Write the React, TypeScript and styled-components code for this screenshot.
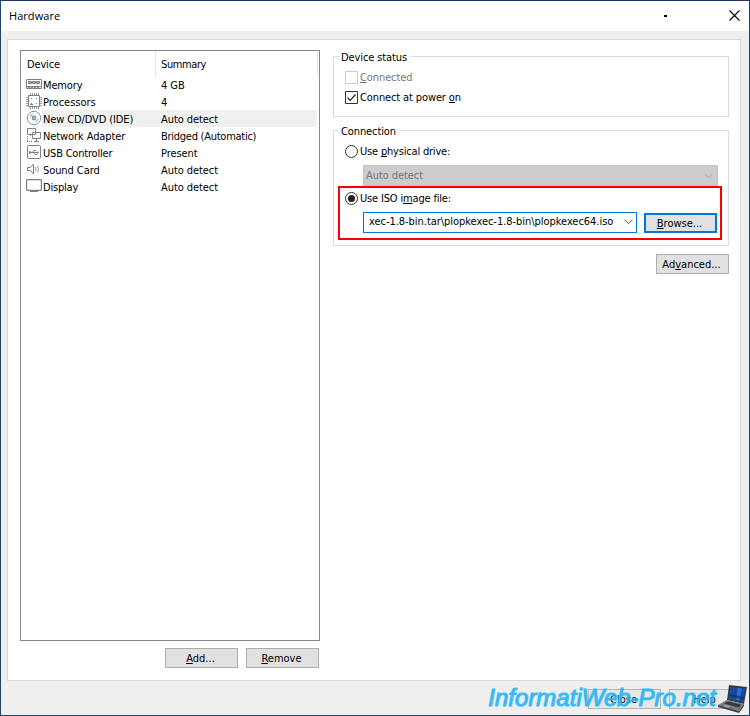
import React from 'react';
import styled, { createGlobalStyle } from 'styled-components';

const GlobalStyle = createGlobalStyle`
  * { box-sizing: border-box; }
  body { margin: 0; background: #fff; }
  u { text-decoration-thickness: 1px; text-underline-offset: 1px; text-decoration-skip-ink: none; }
`;

const Window = styled.div`
  position: relative;
  display: flex;
  flex-direction: column;
  width: 750px;
  height: 716px;
  overflow: hidden;
  border: 1px solid #1f4465;
  border-top-color: #243463;
  background: #efefef;
  color: #000;
  font: 11px/17px 'DejaVu Sans Condensed', Tahoma, 'DejaVu Sans', sans-serif;
`;

const TitleBar = styled.header`
  display: flex;
  align-items: center;
  height: 30px;
  padding: 0 9px 0 8px;
  background: #fff;
`;

const Title = styled.h1`
  flex: 1;
  margin: 0;
  font: 11px/16px 'Open Sans', sans-serif;
  letter-spacing: 0.05px;
`;

const Dot = styled.span`
  width: 3px;
  height: 2px;
  margin-right: 62px;
  background: #000;
`;

const CloseIcon = styled.svg`
  width: 11px;
  height: 11px;
  margin-top: -1px;
`;

const Page = styled.main`
  display: flex;
  height: 642px;
  margin: 8px 8px 0 6px;
  padding: 10px 11px 0 12px;
  border: 1px solid #d9d9d9;
  background: #fff;
`;

const DeviceColumn = styled.section`
  display: flex;
  flex-direction: column;
  width: 300px;
`;

const DeviceList = styled.div`
  height: 591px;
  border: 1px solid #828790;
`;

const ListHeader = styled.div`
  display: flex;
  height: 25px;
  margin-right: 1px;
  line-height: 27px;
`;

const HeaderCell = styled.div<{ $wide?: boolean }>`
  flex: ${(p) => (p.$wide ? '1' : '0 0 135px')};
  padding-left: ${(p) => (p.$wide ? 5 : 6)}px;
  border-right: 1px solid #e5e5e5;
`;

const Row = styled.div`
  display: flex;
  height: 17px;
  padding: 0 2px 0 5px;
`;

const Icon = styled.svg`
  flex: none;
  width: 16px;
  height: 16px;
  fill: none;
  stroke: #808080;
`;

const RowText = styled.div<{ $selected?: boolean }>`
  display: flex;
  flex: 1;
  padding-left: 1px;
  background: ${(p) => (p.$selected ? '#f0f0f0' : 'transparent')};
  line-height: 19px;
`;

const Text = styled.span<{ $track?: number }>`
  letter-spacing: ${(p) => p.$track ?? 0}px;
  white-space: pre;
`;

const DeviceName = styled(Text)`
  flex: 0 0 118px;
`;

const ListButtons = styled.div`
  display: flex;
  justify-content: flex-end;
  gap: 8px;
  margin: 7px 1px 0 0;
`;

const Button = styled.button<{ $default?: boolean }>`
  flex: none;
  width: 73px;
  height: 20px;
  padding: 0 2px 0 0;
  border: ${(p) => (p.$default ? '2px solid #0078d7' : '1px solid #adadad')};
  background: #e1e1e1;
  color: #000;
  font: inherit;
  line-height: 15px;
`;

const Settings = styled.section`
  display: flex;
  flex: 1;
  flex-direction: column;
  padding-left: 13px;
`;

const Group = styled.div<{ $height: number; $top: number }>`
  display: flex;
  flex-direction: column;
  height: ${(p) => p.$height}px;
  margin-top: ${(p) => p.$top}px;
  padding: 0 11px;
  border: 1px solid #dcdcdc;
`;

const Legend = styled.div`
  align-self: flex-start;
  height: 17px;
  margin: -8px 0 0 -6px;
  padding: 0 3px 0 2px;
  background: #fff;
`;

const Option = styled.label<{ $top: number; $disabled?: boolean }>`
  display: flex;
  flex: none;
  align-items: center;
  gap: 2px;
  height: 17px;
  margin-top: ${(p) => p.$top}px;
  color: ${(p) => (p.$disabled ? '#777' : '#000')};
`;

const Mark = styled.svg`
  flex: none;
  width: 13px;
  height: 13px;
  fill: #fff;
`;

const Combo = styled.div<{ $disabled?: boolean }>`
  display: flex;
  align-items: center;
  flex: ${(p) => (p.$disabled ? 'none' : '0 0 274px')};
  height: 21px;
  margin: ${(p) => (p.$disabled ? '5px -1px 0 18px' : '0')};
  padding: ${(p) => (p.$disabled ? '0 4px 0 2px' : '0 3px 2px 5px')};
  border: 1px solid ${(p) => (p.$disabled ? '#c3c3c3' : '#0078d7')};
  background: ${(p) => (p.$disabled ? '#ccc' : '#fff')};
  color: ${(p) => (p.$disabled ? '#777' : '#000')};
`;

const ComboText = styled(Text)`
  flex: 1;
`;

const Chevron = styled.svg<{ $disabled?: boolean }>`
  width: 9px;
  height: 6px;
  fill: none;
  stroke: ${(p) => (p.$disabled ? '#aaa' : '#505050')};
`;

const FileRow = styled.div`
  display: flex;
  gap: 7px;
  margin: 5px 0 0 18px;
  align-items: flex-start;

  & > button { margin-top: 1px; }
`;

const AdvancedRow = styled.div`
  display: flex;
  justify-content: flex-end;
  margin-top: 8px;
`;

const Footer = styled.footer`
  display: flex;
  gap: 8px;
  padding: 8px 7px 0 0;
  justify-content: flex-end;

  button { background: #e8e8e8; border-color: #b5b5b5; }
`;

const Highlight = styled.div`
  position: absolute;
  left: 337px;
  top: 185px;
  width: 384px;
  height: 54px;
  border: 2px solid #f90000;
`;

const Watermark = styled.div`
  position: absolute;
  right: 33px;
  bottom: 3px;
  color: #2fa4f0;
  font: italic 24px/28px 'Liberation Sans', sans-serif;
  letter-spacing: 0;
  -webkit-text-stroke: 1px #24b8f2;
  text-shadow: 0 0 2px #7fe3ff;
  opacity: 0.88;
  white-space: nowrap;
`;

const Laptop = styled.svg`
  position: absolute;
  right: 0;
  bottom: 1px;
  width: 32px;
  height: 31px;
`;

const icons: Record<string, React.ReactNode> = {
  memory: (
    <>
      <path d="M.5 3.500h15v9H.5z" />
      <path d="M2.500 5.500h3v2h-3zM6.500 5.500h3v2h-3zM10.500 5.500h3v2h-3z" fill="#aaa" />
      <path d="M1 10.500h14" />
      <path d="M2 11.500h12" strokeDasharray="2 1" />
    </>
  ),
  cpu: (
    <>
      <path d="M2.500 2.500h11v11h-11z" />
      <path d="M4.500 0v2M6.500 0v2M8.500 0v2M10.500 0v2M12.500 0v2M4.500 14v2M6.500 14v2M8.500 14v2M10.500 14v2M12.500 14v2M0 4.500h2M0 6.500h2M0 8.500h2M0 10.500h2M0 12.500h2M14 4.500h2M14 6.500h2M14 8.500h2M14 10.500h2M14 12.500h2" stroke="#999" />
      <path d="M5 5.500h1M10 5.500h1M4 11.500h3M5 10.500h1M10 10.500h1" />
    </>
  ),
  disc: (
    <g stroke="#7893a9">
      <circle cx="8" cy="8" r="6.700" />
      <circle cx="8" cy="8" r="1.600" strokeWidth="1.700" />
      <path d="M4 6.800a4.200 4.200 0 0 1 2.500-2.700M12 9.200a4.200 4.200 0 0 1-2.500 2.700" />
    </g>
  ),
  network: (
    <>
      <path d="M1.500 1.500h8v6h-8zM6.500 5.500h8v6h-8zM10.500 11.500v3M8 14.500h5" fill="#fff" />
      <path d="M1.500 9v6M1 14.500h6M4.500 8v2" strokeDasharray="1 1" />
    </>
  ),
  usb: (
    <>
      <rect x="1.500" y="1.500" width="13" height="13" rx="1" />
      <path d="M4 8.500h8M6.500 8.500l1.500-2h2M7.500 8.500l1.500 2h2" />
      <path d="M3.500 7.500h1v2h-1zM11.500 7.500l1 1-1 1" />
    </>
  ),
  sound: (
    <>
      <path d="M1.500 6.500h3l3-3.500v10l-3-3.500h-3z" />
      <path d="M9.500 6q1 2 0 4M11.500 4.500q1.800 3.500 0 7" stroke="#999" />
    </>
  ),
  display: (
    <>
      <rect x=".6" y="1.600" width="14.800" height="10.800" rx=".8" strokeWidth="1.200" />
      <path d="M4 13.500h8" />
    </>
  ),
};

const devices = [
  { icon: 'memory', name: 'Memory', summary: '4 GB', track: -0.15 },
  { icon: 'cpu', name: 'Processors', summary: '4' },
  { icon: 'disc', name: 'New CD/DVD (IDE)', summary: 'Auto detect', selected: true, track: -0.12 },
  { icon: 'network', name: 'Network Adapter', summary: 'Bridged (Automatic)', track: -0.1, summaryTrack: -0.26 },
  { icon: 'usb', name: 'USB Controller', summary: 'Present', track: -0.2 },
  { icon: 'sound', name: 'Sound Card', summary: 'Auto detect', track: -0.08 },
  { icon: 'display', name: 'Display', summary: 'Auto detect', track: -0.2 },
];

export default function App() {
  return (
    <Window>
      <GlobalStyle />
      <TitleBar>
        <Title>Hardware</Title>
        <Dot />
        <CloseIcon viewBox="0 0 11 11" stroke="#000" strokeWidth="1.1">
          <path d="M.5.5l10 10M10.500.5l-10 10" />
        </CloseIcon>
      </TitleBar>
      <Page>
        <DeviceColumn>
          <DeviceList>
            <ListHeader>
              <HeaderCell><Text $track={-0.15}>Device</Text></HeaderCell>
              <HeaderCell $wide><Text $track={-0.4}>Summary</Text></HeaderCell>
            </ListHeader>
            {devices.map((d) => (
              <Row key={d.name}>
                <Icon viewBox="0 0 16 16">{icons[d.icon]}</Icon>
                <RowText $selected={d.selected}>
                  <DeviceName $track={d.track}>{d.name}</DeviceName>
                  <Text $track={d.summaryTrack ?? -0.07}>{d.summary}</Text>
                </RowText>
              </Row>
            ))}
          </DeviceList>
          <ListButtons>
            <Button><u>A</u>dd...</Button>
            <Button><u>R</u>emove</Button>
          </ListButtons>
        </DeviceColumn>
        <Settings>
          <Group $height={61} $top={6}>
            <Legend><Text $track={-0.1}>Device status</Text></Legend>
            <Option $top={3} $disabled>
              <Mark viewBox="0 0 13 13"><path d="M.5.5h12v12H.5z" stroke="#ccc" /></Mark>
              <Text $track={-0.1}><u>C</u>onnected</Text>
            </Option>
            <Option $top={3}>
              <Mark viewBox="0 0 13 13">
                <path d="M.5.5h12v12H.5z" stroke="#333" />
                <path d="M2.500 6.500l2.700 2.800L10.500 3.500" stroke="#222" strokeWidth="1.200" fill="none" />
              </Mark>
              <Text $track={-0.12}>Connect at power <u>o</u>n</Text>
            </Option>
          </Group>
          <Group $height={116} $top={13}>
            <Legend><Text $track={-0.1}>Connection</Text></Legend>
            <Option $top={3}>
              <Mark viewBox="0 0 13 13"><circle cx="6.500" cy="6.500" r="6" stroke="#333" /></Mark>
              <Text $track={-0.19}>Use <u>p</u>hysical drive:</Text>
            </Option>
            <Combo $disabled>
              <ComboText $track={-0.07}>Auto detect</ComboText>
              <Chevron $disabled viewBox="0 0 9 6"><path d="M.5.7l4 4 4-4" /></Chevron>
            </Combo>
            <Option $top={4}>
              <Mark viewBox="0 0 13 13">
                <circle cx="6.500" cy="6.500" r="6" stroke="#333" />
                <circle cx="6.500" cy="6.500" r="3.500" fill="#222" />
              </Mark>
              <Text $track={-0.17}>Use ISO i<u>m</u>age file:</Text>
            </Option>
            <FileRow>
              <Combo>
                <ComboText $track={-0.04}>{'xec-1.8-bin.tar\\plopkexec-1.8-bin\\plopkexec64.iso'}</ComboText>
                <Chevron viewBox="0 0 9 6"><path d="M.5.7l4 4 4-4" /></Chevron>
              </Combo>
              <Button $default><u>B</u>rowse...</Button>
            </FileRow>
          </Group>
          <AdvancedRow>
            <Button>Ad<u>v</u>anced...</Button>
          </AdvancedRow>
        </Settings>
      </Page>
      <Footer>
        <Button>Close</Button>
        <Button>Help</Button>
      </Footer>
      <Highlight />
      <Watermark>InformatiWeb-Pro.net</Watermark>
      <Laptop viewBox="0 0 32 31">
        <path d="M12 2l18 2-3 17-17-4z" fill="#343b46" />
        <path d="M13.500 4l15 1.700-2.500 13-14.300-3.200z" fill="#1749a3" />
        <path d="M21 5l-2 12 3 .7L25 5.300z" fill="#2b6fd0" />
        <path d="M13 11l14 3-.5 2.500-14-3z" fill="#0b2870" opacity=".6" />
        <path d="M10 17l17 4-5 7L1 22z" fill="#777b80" />
        <path d="M10.500 18.500l13.500 3.200-2 2.700L7 20.500z" fill="#33373d" />
        <path d="M8 22l5 1.300-1.500 1.500-5-1.300z" fill="#a5a8ab" />
        <path d="M1 22l21 6v2L1 24zM22 28l5-7v2l-5 7z" fill="#3b3d41" />
      </Laptop>
    </Window>
  );
}
